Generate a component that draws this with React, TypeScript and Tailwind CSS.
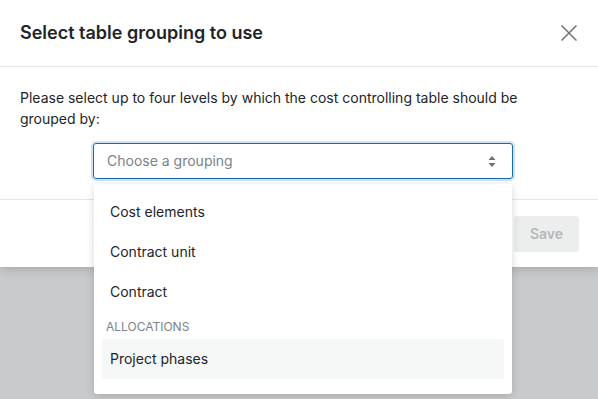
import React from "react";

const items = ["Cost elements", "Contract unit", "Contract"];

const App: React.FC = () => {
  return (
    <div className="relative h-[399px] w-full overflow-hidden bg-[#c9cacb] font-['Inter',sans-serif] text-[#212529]">
      {/* modal */}
      <div className="bg-white shadow-[0_2px_10px_rgba(0,0,0,0.18)]">
        <div className="flex h-[67px] items-center justify-between border-b border-[#e4e6e8] px-5">
          <h2 className="text-lg font-semibold">Select table grouping to use</h2>
          <button type="button" className="mr-[1px] flex h-4 w-4 items-center justify-center text-[#6b7176]">
            <svg width="16" height="16" viewBox="0 0 16 16" fill="none">
              <path d="M0.5 0.5L15.5 15.5M15.5 0.5L0.5 15.5" stroke="currentColor" strokeWidth="1.5" />
            </svg>
          </button>
        </div>

        <div className="px-5 pb-5 pt-5">
          <p className="max-w-[540px] text-sm leading-[21px]">
            Please select up to four levels by which the cost controlling table should be grouped by:
          </p>
          <div className="ml-[73px] mt-[14px] flex h-9 w-[420px] items-center justify-between rounded-[3px] border border-[#1c6aa6] pl-[13px] pr-[16px] shadow-[0_0_0_2px_#cfe3f6]">
            <span className="text-sm text-[#7b8288]">Choose a grouping</span>
            <svg width="8" height="11" viewBox="0 0 8 11" className="text-[#6b7176]">
              <path d="M4 0L7.5 4H0.5Z" fill="currentColor" />
              <path d="M4 11L7.5 7H0.5Z" fill="currentColor" />
            </svg>
          </div>
        </div>

        <div className="flex h-[68px] items-center justify-end border-t border-[#e4e6e8] pr-[19px]">
          <button type="button" className="h-9 w-[65px] rounded-[3px] bg-[#eceeee] text-sm font-semibold text-[#b4b8ba]">
            Save
          </button>
        </div>
      </div>

      {/* dropdown menu */}
      <div className="absolute left-[94px] top-[184px] w-[418px] rounded-[3px] bg-white px-2 pb-[15px] pt-2 shadow-[0_2px_8px_rgba(0,0,0,0.16)]">
        {items.map((item) => (
          <div key={item} className="flex h-10 items-center rounded-[3px] px-2 text-sm">
            {item}
          </div>
        ))}
        <div className="flex h-[27px] items-center px-1 pt-[3px] text-xs text-[#7b8288]">ALLOCATIONS</div>
        <div className="flex h-10 items-center rounded-[3px] bg-[#f6f7f7] px-2 text-sm">Project phases</div>
      </div>
    </div>
  );
};

export default App;
